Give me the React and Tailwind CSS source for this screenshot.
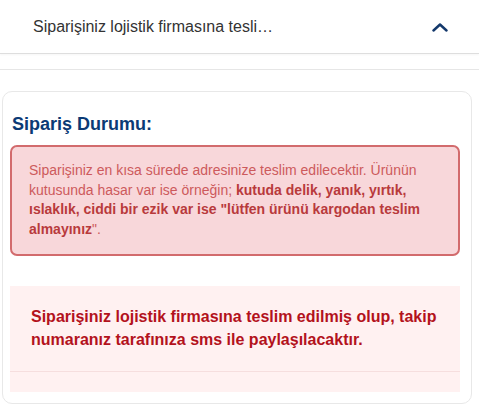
import React from 'react';

export default function App() {
  return (
    <div className="min-h-[408px] bg-white font-['Liberation_Sans',Arial,sans-serif]">
      {/* Accordion header */}
      <div className="flex h-[54px] items-center justify-between border-b border-[#dedede] pl-[33px] pr-[31px] shadow-[0_1px_2px_rgba(0,0,0,0.04)]">
        <span className="text-[16px] text-[#333]">Siparişiniz lojistik firmasına tesli…</span>
        <svg width="16" height="10" viewBox="0 0 16 10" fill="none">
          <path d="M1.5 8.5 L8 2.5 L14.5 8.5" stroke="#13386b" strokeWidth="2.4" strokeLinecap="round" strokeLinejoin="round" />
        </svg>
      </div>
      <div className="h-[16px] border-b border-[#e6e6e6]" />

      {/* Card */}
      <div className="mt-[21px] ml-[2px] mr-[7px] rounded-[10px] border border-[#e8e8e8] pb-[11px] pl-[7px] pr-[11px] pt-[20px]">
        <h2 className="pl-[2px] text-[18px] font-bold leading-[24px] text-[#0b3a75]">Sipariş Durumu:</h2>

        <div className="mt-[9px] rounded-[7px] border-2 border-[#d26b6d] bg-[#f8d7da] pb-[15px] pl-[17px] pr-[14px] pt-[14px] text-[14px] leading-[19.5px] text-[#cd5a5c]">
          Siparişiniz en kısa sürede adresinize teslim edilecektir. Ürünün kutusunda hasar var ise örneğin;{' '}
          <strong className="font-bold text-[#b83a3c]">
            kutuda delik, yanık, yırtık, ıslaklık, ciddi bir ezik var ise "lütfen ürünü kargodan teslim almayınız
          </strong>
          ".
        </div>

        <div className="mt-[30px] bg-[#fff1f1] pt-[19px]">
          <p className="pl-[21px] pr-[16px] text-[16px] font-bold leading-[23px] text-[#b3121c]">
            Siparişiniz lojistik firmasına teslim edilmiş olup, takip numaranız tarafınıza sms ile paylaşılacaktır.
          </p>
          <div className="mt-[20px] h-[21px] border-t border-[#f6dede]" />
        </div>
      </div>
    </div>
  );
}
